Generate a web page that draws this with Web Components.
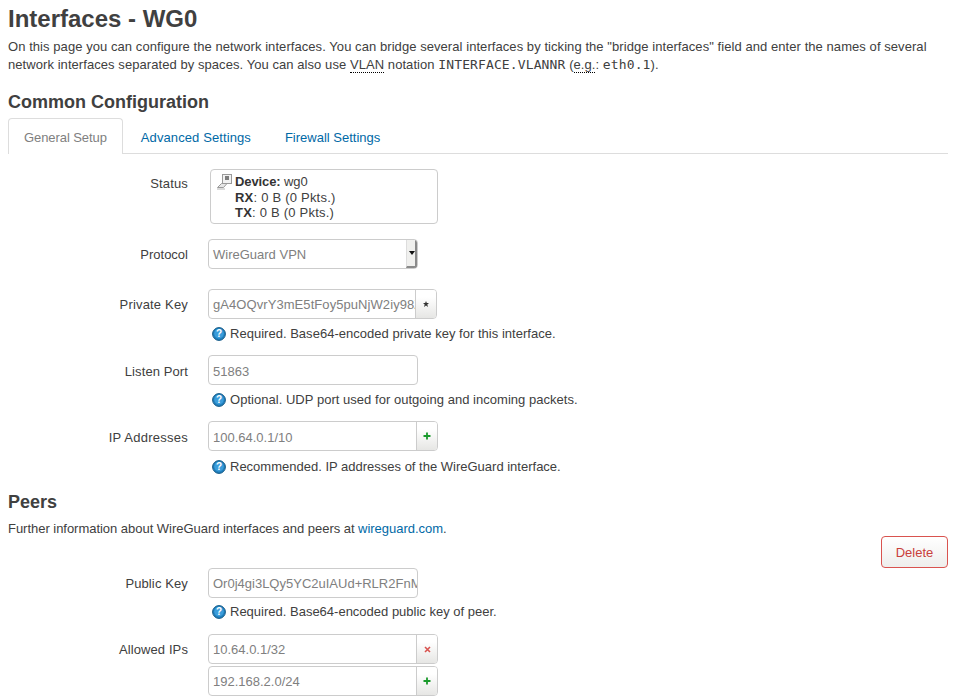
<!DOCTYPE html>
<html>
<head>
<meta charset="utf-8">
<title>Interfaces - WG0</title>
<style>
  html, body { margin: 0; padding: 0; background: #fff; }
  body { font: 13px/18px "Liberation Sans", Arial, sans-serif; color: #404040; overflow: hidden; height: 700px; }
  wg-page { padding: 1px 12px 0 8px; }
</style>
</head>
<body>
<template id="help-icon">
  <svg width="14" height="14" viewBox="0 0 14 14">
    <circle cx="7" cy="7" r="6.4" fill="#1f7fbd" stroke="#165a86" stroke-width="1"/>
    <circle cx="7" cy="6.6" r="4.8" fill="#3b9ddb"/>
    <text x="7" y="10.4" text-anchor="middle" font-family="Liberation Sans" font-weight="bold" font-size="10" fill="#fff">?</text>
  </svg>
</template>

<wg-page>
  <wg-heading level="1">Interfaces - WG0</wg-heading>
  <wg-intro style="margin-top:1px;letter-spacing:.065px">On this page you can configure the network interfaces. You can bridge several interfaces by ticking the "bridge interfaces" field and enter the names of several network interfaces separated by spaces. You can also use <abbr>VLAN</abbr> notation <code>INTERFACE.VLANNR</code> (<abbr>e.g.</abbr>: <code>eth0.1</code>).</wg-intro>
  <wg-heading level="2" style="margin-top:15px">Common Configuration</wg-heading>
  <wg-tabs style="margin-top:2px"></wg-tabs>

  <wg-field label="Status" style="margin-top:15px;--ls:.17px;--lh:30px"><wg-status></wg-status></wg-field>
  <wg-field label="Protocol" style="margin-top:15px"><wg-select value="WireGuard VPN"></wg-select></wg-field>
  <wg-field label="Private Key" style="margin-top:18px;--ls:.18px"><wg-input style="letter-spacing:.07px;width:229px" value="gA4OQvrY3mE5tFoy5puNjW2iy98ZxPqLm" addon="*"></wg-input><wg-help style="letter-spacing:.02px">Required. Base64-encoded private key for this interface.</wg-help></wg-field>
  <wg-field label="Listen Port" style="margin-top:12px;--ls:.1px;--lh:34px;--vlh:32px"><wg-input value="51863"></wg-input><wg-help style="letter-spacing:.03px">Optional. UDP port used for outgoing and incoming packets.</wg-help></wg-field>
  <wg-field label="IP Addresses" style="margin-top:12px;--ls:.25px;--lh:34px;--vlh:32px"><wg-input value="100.64.0.1/10" addon="+"></wg-input><wg-help style="margin-top:7px">Recommended. IP addresses of the WireGuard interface.</wg-help></wg-field>

  <wg-heading level="2" style="margin-top:13px">Peers</wg-heading>
  <wg-intro style="margin-top:4px;letter-spacing:-.03px">Further information about WireGuard interfaces and peers at <a href="#">wireguard.com</a>.</wg-intro>
  <wg-delete style="margin-top:-2px">Delete</wg-delete>
  <wg-field label="Public Key" style="--ls:.12px"><wg-input value="Or0j4gi3LQy5YC2uIAUd+RLR2FnMxKpQ"></wg-input><wg-help style="margin-top:5px">Required. Base64-encoded public key of peer.</wg-help></wg-field>
  <wg-field label="Allowed IPs" style="margin-top:13px;--ls:.1px"><wg-input value="10.64.0.1/32" addon="x"></wg-input><wg-input style="margin-top:2px" value="192.168.2.0/24" addon="+"></wg-input></wg-field>
</wg-page>

<script>
function define(name, css, html, extra) {
  customElements.define(name, class extends HTMLElement {
    connectedCallback() {
      if (this.shadowRoot) return;
      const root = this.attachShadow({ mode: 'open' });
      root.innerHTML = `<style>${css}</style>` + (typeof html === 'function' ? html(this) : html);
      if (extra) extra(root, this);
    }
  });
}

define('wg-page', ':host{display:block}', '<slot></slot>');

define('wg-heading', `
  :host{display:block;color:#404040;font-weight:bold}
  :host([level="1"]){font-size:24px;line-height:36px}
  :host([level="2"]){font-size:18px;line-height:27px}
`, '<slot></slot>');

define('wg-intro', `
  :host{display:block}
  ::slotted(abbr){text-decoration:none;border-bottom:1px dotted #000}
  ::slotted(code){font:13px/18px "DejaVu Sans Mono",monospace;color:#404040;letter-spacing:.12px}
  ::slotted(a){color:#0069a6;text-decoration:none}
`, '<slot></slot>');

define('wg-tabs', `
  :host{display:flex;height:35px;border-bottom:1px solid #ddd;font-size:13px}
  a{display:block;padding:0 15px;margin:0 2px 0 0;line-height:37px;color:#0069a6;text-decoration:none;height:35px;border:1px solid transparent;border-bottom:0}
  a.on{color:#808080;background:#fff;border-color:#ddd;border-radius:4px 4px 0 0;height:35px;margin-bottom:-1px;letter-spacing:-.08px}
  a.wide{letter-spacing:.1px}
`, `<a class="on" href="#">General Setup</a><a class="wide" href="#">Advanced Settings</a><a href="#">Firewall Settings</a>`);

define('wg-field', `
  :host{display:flex;align-items:flex-start}
  label{width:180px;flex:none;text-align:right;line-height:var(--lh,32px);color:#404040;letter-spacing:var(--ls,0)}
  .c{margin-left:20px;display:flex;flex-direction:column;flex:1;min-width:0}
`, el => `<label>${el.getAttribute('label')}</label><div class="c"><slot></slot></div>`);

define('wg-status', `
  :host{display:block;margin-left:2px;width:228px;height:55px;box-sizing:border-box;border:1px solid #ccc;border-radius:4px;padding:4px 6px;line-height:15.5px;font-size:13px;color:#404040}
  .r{padding-left:18px;position:relative}
  svg{position:absolute;left:-1px;top:-1px}
  b{color:#333}
  .w{letter-spacing:.22px}
  .n{letter-spacing:-.1px}
`, `<div class="r"><svg width="17" height="17" viewBox="0 0 17 17">
    <rect x="6.5" y="1.5" width="9" height="9" fill="#f2f2f2" stroke="#9a9a9a"/>
    <rect x="9" y="3" width="4" height="4" fill="#7d7d7d"/>
    <path d="M1.5 14.5 L5.5 10.5 H11 L7.5 14.5 Z" fill="#e6e6e6" stroke="#999"/>
    <path d="M1 16 H9" stroke="#b5b5b5"/>
  </svg><span class="n"><b>Device:</b> wg0</span><br><span class="w"><b>RX</b>: 0 B (0 Pkts.)</span><br><span class="w"><b>TX</b>: 0 B (0 Pkts.)</span></div>`);

define('wg-select', `
  :host{display:flex;width:210px;height:30px;box-sizing:border-box;border:1px solid #ccc;border-radius:4px;color:#808080;line-height:30px;padding-left:4px;position:relative;overflow:hidden}
  i{position:absolute;right:0;top:0;bottom:0;width:11px;background:#f0f0ee;border-left:1px solid #ddd;border-right:2px solid #8a8a8a;border-bottom:2px solid #8a8a8a;box-sizing:border-box}
  i:after{content:"";position:absolute;left:2px;top:11px;border:3px solid transparent;border-top:4px solid #111}
`, el => `${el.getAttribute('value')}<i></i>`);

const ADDONS = {
  '*': '<svg width="6" height="6" viewBox="0 0 6 6"><path d="M3 0l.8 2.1H6L4.3 3.5 5 6 3 4.5 1 6l.7-2.5L0 2.1h2.2z" fill="#333"/></svg>',
  '+': '<svg width="8" height="8" viewBox="0 0 8 8"><path d="M4 .5v7M.5 4h7" stroke="#1a9a2c" stroke-width="1.8"/></svg>',
  'x': '<svg width="7" height="7" viewBox="0 0 7 7"><path d="M1 1l5 5M6 1l-5 5" stroke="#d9534f" stroke-width="1.6"/></svg>'
};

define('wg-input', `
  :host{display:flex;height:30px;width:210px;box-sizing:border-box;border:1px solid #ccc;border-radius:4px;background:#fff}
  :host([addon]){width:230px}
  .v{flex:1;min-width:0;overflow:hidden;white-space:nowrap;padding-left:4px;line-height:var(--vlh,30px);height:28px;color:#808080}
  .a{flex:none;width:20px;border-left:1px solid #ccc;display:flex;align-items:center;justify-content:center;background:linear-gradient(#fff 25%,#e6e6e4);border-radius:0 3px 3px 0}
`, el => {
  const a = el.getAttribute('addon');
  return `<div class="v">${el.getAttribute('value')}</div>` + (a ? `<div class="a">${ADDONS[a]}</div>` : '');
});

define('wg-help', `
  :host{display:flex;align-items:center;margin:6px 0 0 4px;height:18px;color:#404040}
  svg{margin-right:4px;flex:none}
`, '', (root) => {
  root.appendChild(document.getElementById('help-icon').content.cloneNode(true));
  root.appendChild(document.createElement('slot'));
});

define('wg-delete', `
  :host{display:flex;justify-content:flex-end;height:32px}
  button{font:13px "Liberation Sans",sans-serif;color:#c9403c;width:67px;height:32px;border:1px solid #d9534f;border-radius:4px;background:linear-gradient(#fff,#eeeeec);padding:0}
`, '<button><slot></slot></button>');
</script>
</body>
</html>
